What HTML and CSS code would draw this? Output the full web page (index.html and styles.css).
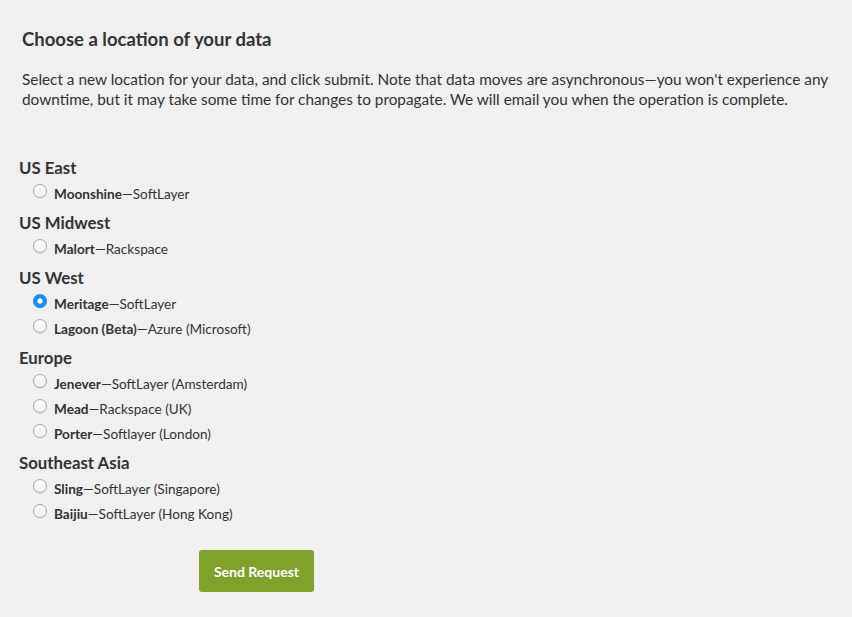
FILE: index.html
```html
<!DOCTYPE html>
<html>
<head>
<meta charset="utf-8">
<link rel="stylesheet" href="styles.css">
</head>
<body>
<div class="page">
  <h2 class="title">Choose a location of your data</h2>
  <p class="intro">Select a new location for your data, and click submit. Note that data moves are asynchronous—you won't experience any downtime, but it may take some time for changes to propagate. We will email you when the operation is complete.</p>
  <form class="regions">
    <div class="region">
      <h3 class="region-name">US East</h3>
      <label class="option"><input type="radio" name="loc" class="radio"><span><b>Moonshine</b>—SoftLayer</span></label>
    </div>
    <div class="region">
      <h3 class="region-name">US Midwest</h3>
      <label class="option"><input type="radio" name="loc" class="radio"><span><b>Malort</b>—Rackspace</span></label>
    </div>
    <div class="region">
      <h3 class="region-name">US West</h3>
      <label class="option"><input type="radio" name="loc" class="radio" checked><span><b>Meritage</b>—SoftLayer</span></label>
      <label class="option"><input type="radio" name="loc" class="radio"><span><b>Lagoon (Beta)</b>—Azure (Microsoft)</span></label>
    </div>
    <div class="region">
      <h3 class="region-name">Europe</h3>
      <label class="option"><input type="radio" name="loc" class="radio"><span><b>Jenever</b>—SoftLayer (Amsterdam)</span></label>
      <label class="option"><input type="radio" name="loc" class="radio"><span><b>Mead</b>—Rackspace (UK)</span></label>
      <label class="option"><input type="radio" name="loc" class="radio"><span><b>Porter</b>—Softlayer (London)</span></label>
    </div>
    <div class="region">
      <h3 class="region-name">Southeast Asia</h3>
      <label class="option"><input type="radio" name="loc" class="radio"><span><b>Sling</b>—SoftLayer (Singapore)</span></label>
      <label class="option"><input type="radio" name="loc" class="radio"><span><b>Baijiu</b>—SoftLayer (Hong Kong)</span></label>
    </div>
    <div class="actions">
      <button type="button" class="submit">Send Request</button>
    </div>
  </form>
</div>
</body>
</html>
```
FILE: styles.css
```css
html, body {
  margin: 0;
  padding: 0;
  background: #f0f0f0;
}
body {
  font-family: Lato, "Open Sans", sans-serif;
  color: #333;
}
.page {
  padding: 26px 0 0 0;
}
.title {
  margin: 0 0 0 22px;
  font-size: 18.5px;
  line-height: 26px;
  font-weight: 700;
  color: #333;
}
.intro {
  margin: 17px 0 0 22px;
  width: 820px;
  font-size: 15.35px;
  line-height: 20px;
  color: #333;
}
.regions {
  margin: 46px 0 0 19px;
}
.region {
  margin-bottom: 5px;
}
.region-name {
  margin: 0;
  font-size: 16.8px;
  line-height: 25px;
  font-weight: 700;
}
.option {
  display: flex;
  align-items: center;
  padding: 2px 0 0 14px;
  height: 25px;
  box-sizing: border-box;
  font-size: 13.6px;
}
.option b {
  font-weight: 700;
}
.radio {
  appearance: none;
  -webkit-appearance: none;
  margin: -6px 7px 0 0;
  width: 14px;
  height: 14px;
  border-radius: 50%;
  border: 1px solid #a9a9a9;
  background: linear-gradient(#fff, #f2f2f2);
  box-shadow: 0 0.5px 0.5px rgba(0, 0, 0, 0.12);
  box-sizing: border-box;
  flex: none;
}
.radio:checked {
  border: none;
  background: radial-gradient(circle, #fff 0 2.3px, #1b8cf2 3px);
}
.actions {
  padding: 20px 0 0 180px;
}
.submit {
  width: 115px;
  height: 42px;
  border: none;
  border-radius: 3px;
  background: #80a22b;
  color: #fff;
  font-family: inherit;
  font-size: 14px;
  font-weight: 700;
  cursor: pointer;
}
```
